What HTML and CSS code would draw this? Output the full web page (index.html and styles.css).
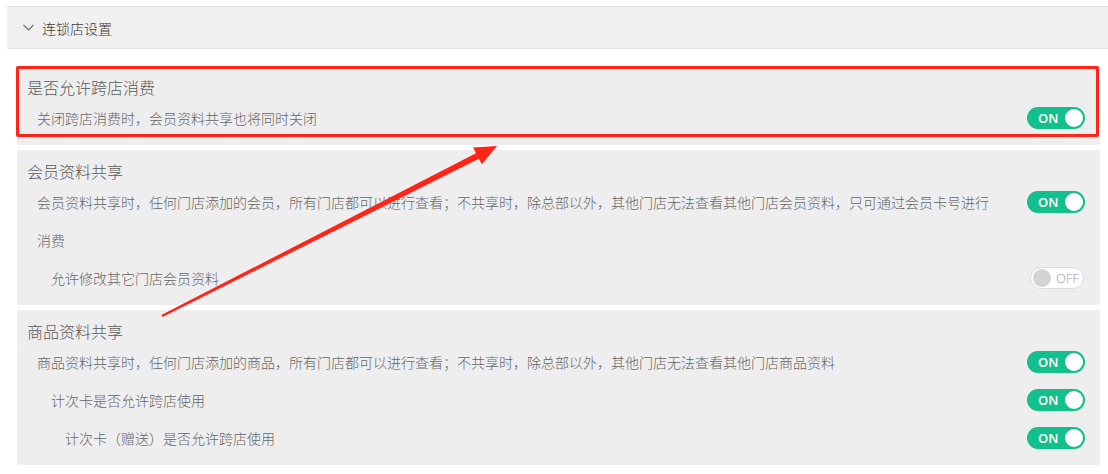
FILE: index.html
```html
<!doctype html>
<html>
  <head>
    <meta charset="utf-8">
    <title>连锁店设置</title>
    <link rel="stylesheet" href="styles.css">
  </head>
  <body>
    <div class="page">
      <div class="panel-head">
        <svg class="chevron" width="11" height="7" viewBox="0 0 11 7"><polyline points="0.5,0.8 5.5,5.8 10.5,0.8" fill="none" stroke="#666" stroke-width="1.2"/></svg>
        <span>连锁店设置</span>
      </div>
      <div class="groups">
        <div class="group first">
          <div class="group-title">是否允许跨店消费</div>
          <div class="opt">
            <div class="opt-label">关闭跨店消费时，会员资料共享也将同时关闭</div>
            <span class="switch on">ON</span>
          </div>
        </div>
        <div class="group">
          <div class="group-title">会员资料共享</div>
          <div class="opt">
            <div class="opt-label">会员资料共享时，任何门店添加的会员，所有门店都可以进行查看；不共享时，除总部以外，其他门店无法查看其他门店会员资料，只可通过会员卡号进行消费</div>
            <span class="switch on">ON</span>
          </div>
          <div class="opt">
            <div class="opt-label sub">允许修改其它门店会员资料</div>
            <span class="switch off">OFF</span>
          </div>
        </div>
        <div class="group">
          <div class="group-title">商品资料共享</div>
          <div class="opt">
            <div class="opt-label">商品资料共享时，任何门店添加的商品，所有门店都可以进行查看；不共享时，除总部以外，其他门店无法查看其他门店商品资料</div>
            <span class="switch on">ON</span>
          </div>
          <div class="opt">
            <div class="opt-label sub">计次卡是否允许跨店使用</div>
            <span class="switch on">ON</span>
          </div>
          <div class="opt">
            <div class="opt-label subsub">计次卡（赠送）是否允许跨店使用</div>
            <span class="switch on">ON</span>
          </div>
        </div>
      </div>
      <!-- annotation drawn over the screenshot -->
      <div class="mark-box"></div>
      <svg class="mark-arrow" width="1108" height="474" viewBox="0 0 1108 474">
        <polygon fill="#ff2418" points="162.6,317 478.8,158.8 481.8,164.2 497,146 473.1,147.6 476,153.2 161.4,315"/>
      </svg>
    </div>
  </body>
</html>
```

FILE: styles.css
```css
body {
  margin: 0;
  background: #fff;
  font-family: "Noto Sans CJK SC", "Microsoft YaHei", sans-serif;
  font-weight: 300;
}

.page {
  position: relative;
  padding: 6px 0 0 7px;
}

.panel-head {
  display: flex;
  align-items: center;
  height: 41px;
  padding-left: 16px;
  background: #f0f0f0;
  border-top: 1px solid #e3e3e3;
  border-bottom: 1px solid #e3e3e3;
  font-size: 14px;
  color: #3a3a3a;
}

.chevron {
  margin-right: 8px;
}

.groups {
  display: flex;
  flex-direction: column;
  gap: 5px;
  margin: 17px 8px 0 10px;
}

.group {
  background: #eee;
  padding: 10px 15px 8px 10px;
}

.group-title {
  font-size: 16px;
  line-height: 23px;
  color: #5a5a5a;
}

.opt {
  display: flex;
  align-items: flex-start;
}

.opt-label {
  flex: 1;
  font-size: 14px;
  line-height: 38px;
  color: #666;
  padding: 0 30px 0 10px;
}

.opt-label.sub {
  padding-left: 24px;
}

.opt-label.subsub {
  padding-left: 38px;
}

.switch {
  position: relative;
  box-sizing: border-box;
  display: flex;
  align-items: center;
  height: 22px;
  margin-top: 8px;
  border-radius: 11px;
  font-family: "Open Sans", sans-serif;
  font-size: 13px;
}

.switch::after {
  content: "";
  position: absolute;
  top: 2px;
  width: 18px;
  height: 18px;
  border-radius: 50%;
}

.switch.on {
  width: 58px;
  padding-left: 11px;
  background: #13bf8b;
  color: #fff;
  font-weight: 600;
}

.switch.on::after {
  right: 2px;
  background: #fff;
}

.switch.off {
  width: 54px;
  margin-right: 1px;
  padding-left: 25px;
  background: #fff;
  border: 1px solid #dcdcdc;
  color: #999;
}

.switch.off::after {
  top: 1px;
  left: 2px;
  background: #d4d4d4;
}

.mark-box {
  position: absolute;
  left: 16px;
  top: 66px;
  width: 1077px;
  height: 65px;
  border: 3px solid #ff2418;
  border-radius: 2px;
}

.mark-arrow {
  position: absolute;
  left: 0;
  top: 0;
  pointer-events: none;
}
```
